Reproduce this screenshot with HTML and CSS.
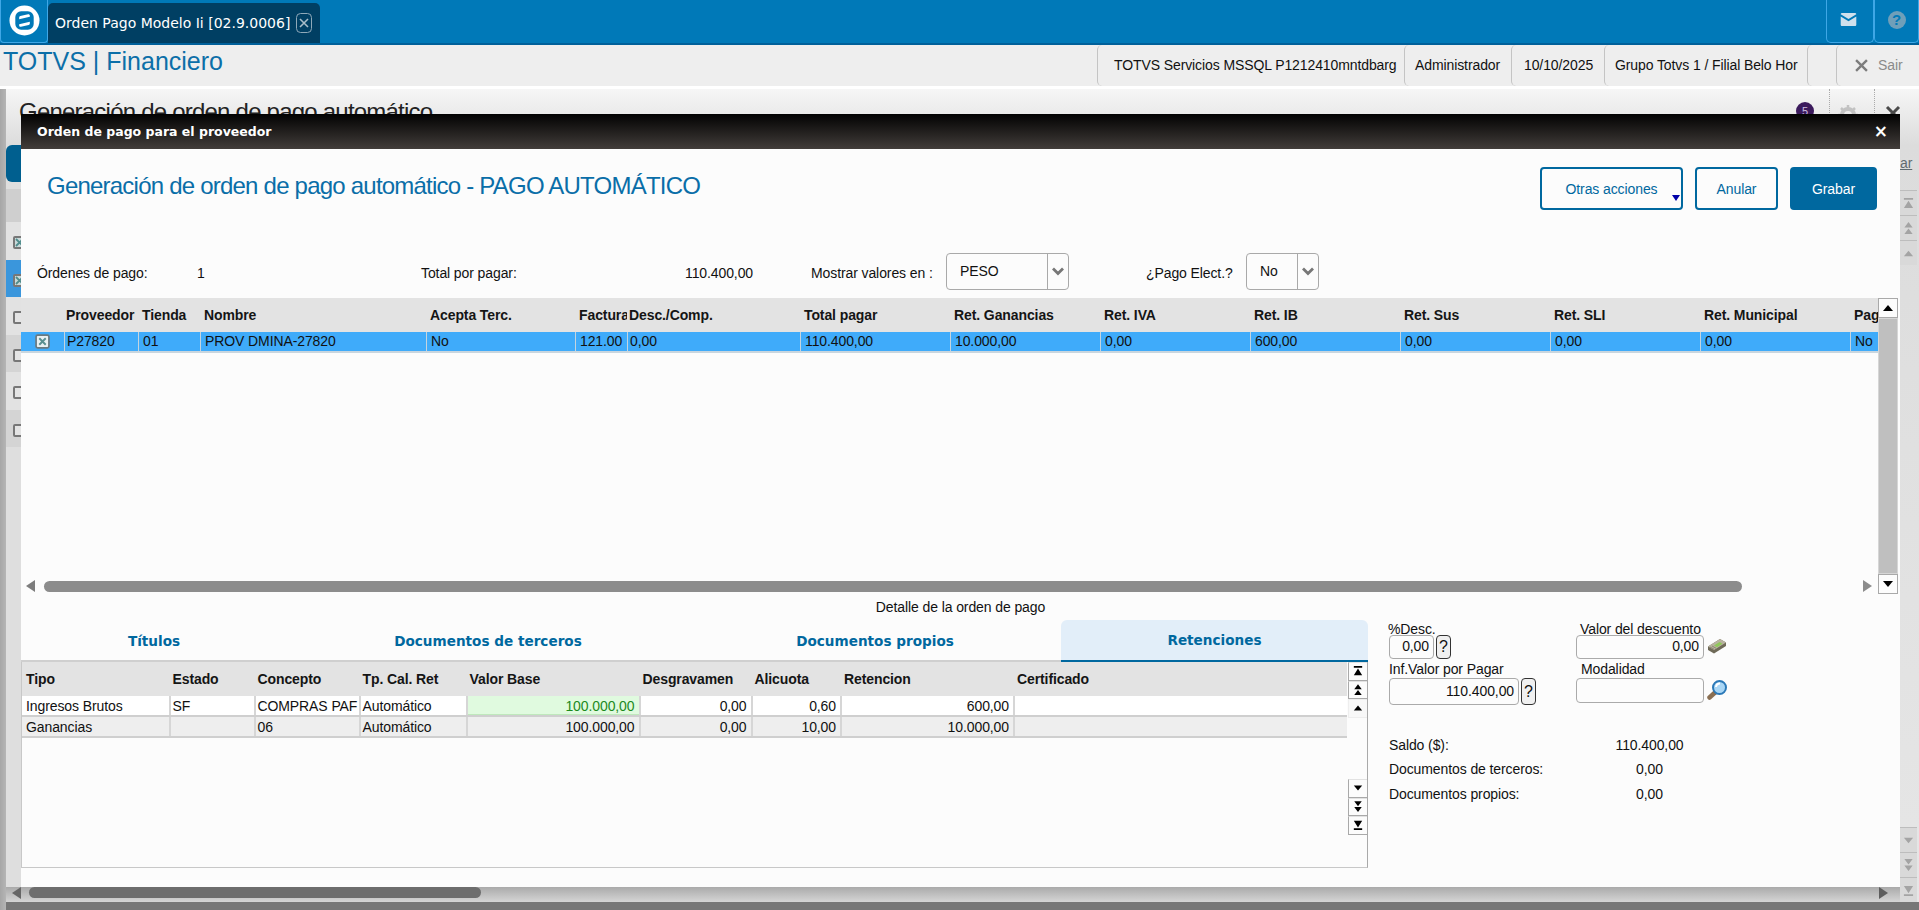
FILE: index.html
```html
<!DOCTYPE html>
<html lang="es">
<head>
<meta charset="utf-8">
<title>Orden Pago Modelo Ii</title>
<link rel="stylesheet" href="styles.css">
</head>
<body>
<svg class="defs" width="0" height="0" aria-hidden="true">
  <symbol id="up" viewBox="0 0 12 12"><path d="M6 3l5 6H1z"/></symbol>
  <symbol id="dn" viewBox="0 0 12 12"><path d="M6 9L1 3h10z"/></symbol>
  <symbol id="up2" viewBox="0 0 12 14"><path d="M6 0l4.500 6h-9zM6 7l4.500 6h-9z"/></symbol>
  <symbol id="dn2" viewBox="0 0 12 14"><path d="M6 6L1.500 0h9zM6 13L1.500 7h9z"/></symbol>
  <symbol id="top" viewBox="0 0 12 14"><path d="M1 1h10v2H1zM6 4l5 8H1z"/></symbol>
  <symbol id="bot" viewBox="0 0 12 14"><path d="M1 11h10v2H1zM6 10L1 2h10z"/></symbol>
</svg>

<header class="topbar">
  <div class="logo">
    <svg viewBox="0 0 32 32" width="31" height="31"><circle cx="16" cy="16" r="15.500" fill="#fff"/><rect x="6.500" y="6.500" width="19" height="19" rx="6" fill="#0079b8"/><path d="M10.500 14.800v-2c0-.8.500-1.300 1.200-1.500l8-1.800c1-.2 1.800.4 1.800 1.400v1.300zM21.500 17.200v2c0 .8-.500 1.300-1.200 1.500l-8 1.800c-1 .2-1.800-.4-1.800-1.400v-1.300z" fill="#fff"/></svg>
  </div>
  <div class="apptab">
    <span class="apptab-label">Orden Pago Modelo Ii [02.9.0006]</span>
    <span class="apptab-close"><svg viewBox="0 0 16 20" width="16" height="20"><rect x=".5" y=".5" width="15" height="19" rx="4" fill="none" stroke="#8fa9b9"/><path d="M4 6l8 8M12 6l-8 8" stroke="#a9bdc9" stroke-width="1.600" fill="none"/></svg></span>
  </div>
  <div class="topbar-fill"></div>
  <div class="topbtn topbtn-mail"><svg viewBox="0 0 18 15" width="17" height="13"><path d="M0 1.500C0 .7.700 0 1.500 0h15c.8 0 1.500.7 1.500 1.500L9 7zM0 4v9.500c0 .8.700 1.500 1.500 1.500h15c.8 0 1.500-.7 1.500-1.500V4L9 9.500z" fill="#cfe0ec"/></svg></div>
  <div class="topbtn topbtn-help"><span class="help-dot">?</span></div>
</header>

<div class="subbar">
  <div class="brand">TOTVS | Financiero</div>
  <div class="subcell sub-env">TOTVS Servicios MSSQL P1212410mntdbarg</div>
  <div class="subcell sub-user">Administrador</div>
  <div class="subcell sub-date">10/10/2025</div>
  <div class="subcell sub-group">Grupo Totvs 1 / Filial Belo Hor</div>
  <div class="subcell sub-blank"></div>
  <div class="subcell sub-exit"><svg viewBox="0 0 12 12" width="13" height="13"><path d="M1 1l10 10M11 1L1 11" stroke="#7d7d7d" stroke-width="2.200" fill="none"/></svg><span>Sair</span></div>
</div>

<main class="page">
  <div class="window">
    <div class="win-head">
      <div class="win-title">Generación de orden de pago automático</div>
      <div class="win-tools">
        <span class="badge">5</span>
        <span class="win-tool"><svg viewBox="0 0 20 20" width="20" height="20"><circle cx="10" cy="10" r="6" fill="none" stroke="#c2c2c2" stroke-width="4"/><path d="M10 0v4M10 16v4M0 10h4M16 10h4M3 3l3 3M14 14l3 3M17 3l-3 3M6 14l-3 3" stroke="#c2c2c2" stroke-width="2.500"/></svg></span>
        <span class="win-tool win-close"><svg viewBox="0 0 16 16" width="16" height="16"><path d="M2 2l12 12M14 2L2 14" stroke="#4a4a4a" stroke-width="3" fill="none"/></svg></span>
      </div>
    </div>
    <div class="win-main">
      <div class="win-center">
        <div class="win-left">
          <div class="win-btn"></div>
          <div class="win-band"></div>
          <div class="win-row light"><span class="wcheck on"><svg viewBox="0 0 9 9" width="9" height="9"><path d="M1 1l7 7M8 1L1 8" stroke="#4f8c8c" stroke-width="1.800"/></svg></span></div>
          <div class="win-row sel"><span class="wcheck on"><svg viewBox="0 0 9 9" width="9" height="9"><path d="M1 1l7 7M8 1L1 8" stroke="#4f8c8c" stroke-width="1.800"/></svg></span></div>
          <div class="win-row light"><span class="wcheck"></span></div>
          <div class="win-row dark"><span class="wcheck"></span></div>
          <div class="win-row light"><span class="wcheck"></span></div>
          <div class="win-row dark"><span class="wcheck"></span></div>
        </div>
        <div class="win-hscroll">
          <span class="arrow-left dark-arrow"></span>
          <span class="win-thumb"></span>
          <span class="arrow-right dark-arrow"></span>
        </div>
      </div>
      <div class="win-right">
        <a class="win-link">ar</a>
        <div class="win-scroll">
          <div class="wsb"><svg><use href="#top"/></svg></div>
          <div class="wsb"><svg><use href="#up2"/></svg></div>
          <div class="wsb"><svg><use href="#up"/></svg></div>
          <div class="wsb-gap"></div>
          <div class="wsb"><svg><use href="#dn"/></svg></div>
          <div class="wsb"><svg><use href="#dn2"/></svg></div>
          <div class="wsb"><svg><use href="#bot"/></svg></div>
        </div>
      </div>
    </div>
  </div>
</main>

<section class="modal">
  <div class="modal-head">
    <span>Orden de pago para el proveedor</span>
    <span class="modal-x">×</span>
  </div>
  <div class="modal-body">
    <div class="m-top">
      <h1 class="m-title">Generación de orden de pago automático - PAGO AUTOMÁTICO</h1>
      <div class="m-actions">
        <button class="btn btn-more">Otras acciones<i class="btn-caret"></i></button>
        <button class="btn btn-cancel">Anular</button>
        <button class="btn btn-save">Grabar</button>
      </div>
    </div>

    <div class="summary">
      <span class="s-a">Órdenes de pago:</span>
      <span class="s-b">1</span>
      <span class="s-c">Total por pagar:</span>
      <span class="s-d">110.400,00</span>
      <span class="s-e">Mostrar valores en :</span>
      <div class="select sel-peso"><span>PESO</span><b><svg viewBox="0 0 14 9" width="14" height="9"><path d="M2 1.500l5 5 5-5" fill="none" stroke="#777" stroke-width="2.800"/></svg></b></div>
      <span class="s-f">¿Pago Elect.?</span>
      <div class="select sel-no"><span>No</span><b><svg viewBox="0 0 14 9" width="14" height="9"><path d="M2 1.500l5 5 5-5" fill="none" stroke="#777" stroke-width="2.800"/></svg></b></div>
    </div>

    <div class="grid-wrap">
      <div class="grid-main">
        <div class="t1">
          <div class="t1-row t-head">
            <div></div><div>Proveedor</div><div>Tienda</div><div>Nombre</div><div>Acepta Terc.</div><div>Factura</div><div>Desc./Comp.</div><div>Total pagar</div><div>Ret. Ganancias</div><div>Ret. IVA</div><div>Ret. IB</div><div>Ret. Sus</div><div>Ret. SLI</div><div>Ret. Municipal</div><div>Pago Elect.</div>
          </div>
          <div class="t1-row t1-sel">
            <div class="cell-check"><svg viewBox="0 0 14 14" width="15" height="15"><rect x="1" y="1" width="12" height="12" rx="1.500" fill="#e9f1f3" stroke="#6a7a80" stroke-width="1.600"/><path d="M4 4l6 6M10 4l-6 6" stroke="#5a8f90" stroke-width="1.800"/></svg></div>
            <div>P27820</div><div>01</div><div>PROV DMINA-27820</div><div>No</div><div>121.00</div><div>0,00</div><div>110.400,00</div><div>10.000,00</div><div>0,00</div><div>600,00</div><div>0,00</div><div>0,00</div><div>0,00</div><div>No</div>
          </div>
        </div>
        <div class="h-scroll">
          <span class="arrow-left"></span>
          <span class="h-thumb"></span>
          <span class="arrow-right"></span>
        </div>
      </div>
      <div class="v-scroll">
        <div class="vs-btn"><svg><use href="#up"/></svg></div>
        <div class="vs-track"></div>
        <div class="vs-btn"><svg><use href="#dn"/></svg></div>
      </div>
    </div>

    <div class="caption">Detalle de la orden de pago</div>

    <div class="detail">
      <div class="detail-left">
        <nav class="tabs">
          <span class="tab tab-1">Títulos</span>
          <span class="tab tab-2">Documentos de terceros</span>
          <span class="tab tab-3">Documentos propios</span>
          <span class="tab tab-4">Retenciones</span>
        </nav>
        <div class="frame">
          <div class="t2">
            <div class="t2-row t-head">
              <div>Tipo</div><div>Estado</div><div>Concepto</div><div>Tp. Cal. Ret</div><div>Valor Base</div><div>Desgravamen</div><div>Alicuota</div><div>Retencion</div><div>Certificado</div>
            </div>
            <div class="t2-row t2-a">
              <div>Ingresos Brutos</div><div>SF</div><div>COMPRAS PAF</div><div>Automático</div><div class="num ok">100.000,00</div><div class="num">0,00</div><div class="num">0,60</div><div class="num">600,00</div><div></div>
            </div>
            <div class="t2-row t2-b">
              <div>Ganancias</div><div></div><div>06</div><div>Automático</div><div class="num">100.000,00</div><div class="num">0,00</div><div class="num">10,00</div><div class="num">10.000,00</div><div></div>
            </div>
          </div>
          <div class="nav">
            <div class="nav-btn"><svg><use href="#top"/></svg></div>
            <div class="nav-btn"><svg><use href="#up2"/></svg></div>
            <div class="nav-btn nav-soft"><svg><use href="#up"/></svg></div>
            <div class="nav-gap"></div>
            <div class="nav-btn"><svg><use href="#dn"/></svg></div>
            <div class="nav-btn"><svg><use href="#dn2"/></svg></div>
            <div class="nav-btn"><svg><use href="#bot"/></svg></div>
          </div>
        </div>
      </div>

      <div class="side">
        <div class="form">
          <label class="lbl lbl-desc">%Desc.</label>
          <label class="lbl lbl-val">Valor del descuento</label>
          <div class="field-row"><span class="input in-desc">0,00</span><span class="q">?</span></div>
          <div class="field-row"><span class="input in-wide">0,00</span>
            <svg class="f-icon" viewBox="0 0 20 18" width="20" height="18"><path d="M1 9.500L13 2l6 3.500V9L7 16.500 1 13z" fill="#6f6a58"/><path d="M1 9.500L13 2l6 3.500L7 13z" fill="#b9b3a0"/><path d="M7 8.500l5.500-3.500 3 1.700L10 10.300z" fill="#8fc85a"/><path d="M3 10l4 2.200M5 9l4 2.200" stroke="#8c8672"/></svg>
          </div>
          <label class="lbl lbl-inf">Inf.Valor por Pagar</label>
          <label class="lbl lbl-mod">Modalidad</label>
          <div class="field-row"><span class="input in-pay">110.400,00</span><span class="q q-tall">?</span></div>
          <div class="field-row field-top"><span class="input in-wide"></span>
            <svg class="f-icon" viewBox="0 0 20 20" width="20" height="20"><path d="M8 12.500l-5.500 5" stroke="#8a6f52" stroke-width="4.500" stroke-linecap="round"/><circle cx="12.500" cy="7.500" r="6.500" fill="#a9d6f5" stroke="#2b79b8" stroke-width="2"/><path d="M9 7a4 4 0 0 1 4-3.500" fill="none" stroke="#fff" stroke-width="2"/></svg>
          </div>
        </div>
        <div class="totals">
          <span>Saldo ($):</span><span class="t-val">110.400,00</span>
          <span>Documentos de terceros:</span><span class="t-val">0,00</span>
          <span>Documentos propios:</span><span class="t-val">0,00</span>
        </div>
      </div>
    </div>
  </div>
</section>
</body>
</html>
```

FILE: styles.css
```css
* { box-sizing: border-box; }
html, body { margin: 0; height: 100%; }
body {
  position: relative;
  width: 1919px;
  height: 910px;
  overflow: hidden;
  font: 14px/1.2 "Liberation Sans", Arial, sans-serif;
  letter-spacing: -.1px;
  color: #111;
  background: #fff;
  display: flex;
  flex-direction: column;
}
.defs { position: absolute; }

/* top bar */
.topbar {
  height: 45px;
  flex: none;
  display: flex;
  background: #0079b8;
  border-bottom: 2px solid #00609a;
}
.logo {
  width: 48px;
  display: flex;
  align-items: center;
  justify-content: center;
  background: #0079b8;
  border: 1px solid #3fa7e6;
  border-top: 0;
  border-radius: 0 0 4px 4px;
  padding-bottom: 1px;
}
.apptab {
  width: 272px;
  margin-top: 3px;
  padding-left: 7px;
  display: flex;
  align-items: center;
  gap: 6px;
  background: #003f63;
  border-radius: 5px 5px 0 0;
  color: #fff;
  font: 14px "DejaVu Sans", sans-serif;
  letter-spacing: 0;
}
.apptab-close { display: flex; }
.topbar-fill { flex: 1; }
.topbtn {
  width: 48px;
  display: flex;
  align-items: center;
  justify-content: center;
  border: 1px solid #3fa7e6;
  border-top: 0;
  border-radius: 0 0 5px 5px;
  padding-bottom: 3px;
}
.topbtn-mail { padding-right: 3px; }
.topbtn-help { width: 45px; }
.help-dot {
  width: 18px;
  height: 18px;
  border-radius: 50%;
  background: #6f9fb9;
  color: #0079b8;
  font: bold 15px/18px "Liberation Sans", sans-serif;
  text-align: center;
}

/* second bar */
.subbar {
  height: 41px;
  flex: none;
  display: flex;
  background: #eeeeee;
}
.brand {
  width: 1097px;
  padding: 1px 0 0 3px;
  font-size: 25px;
  line-height: 30px;
  letter-spacing: 0;
  color: #0c6fa8;
}
.subcell {
  display: flex;
  align-items: center;
  height: 41px;
  border-left: 1px solid #c4c4c4;
  border-radius: 5px 0 0 5px;
  white-space: nowrap;
  overflow: hidden;
}
.sub-env { width: 307px; padding-left: 16px; }
.sub-user { width: 107px; padding-left: 10px; }
.sub-date { width: 93px; padding-left: 12px; }
.sub-group { width: 203px; padding-left: 10px; }
.sub-blank { width: 29px; }
.sub-exit { width: 83px; padding-left: 18px; gap: 10px; color: #8a8a8a; }

/* window behind the dialog */
.page {
  flex: 1;
  min-height: 0;
  padding: 3px 0 8px 6px;
  background: linear-gradient(90deg, #a6a6a6 0, #b5b5b5 6px, #777 6px);
  position: relative;
}
.page::before {
  content: "";
  position: absolute;
  left: 0; right: 0; top: 0;
  height: 3px;
  background: #fff;
}
.window {
  height: 100%;
  display: flex;
  flex-direction: column;
  background: #dedede;
}
.win-head {
  height: 56px;
  flex: none;
  display: flex;
  justify-content: space-between;
  padding-left: 13px;
  background: linear-gradient(#f6f6f6, #dcdcdc);
}
.win-title { font-size: 24px; letter-spacing: -.78px; padding-top: 9px; color: #222; }
.win-tools { display: flex; align-items: flex-start; }
.badge {
  width: 18px;
  height: 18px;
  margin: 13px 15px 0 0;
  border-radius: 50%;
  background: #3b1a5c;
  color: #cdbfe0;
  font-size: 11px;
  line-height: 18px;
  text-align: center;
}
.win-tool {
  width: 45px;
  height: 36px;
  padding: 16px 0 0 8px;
  border-left: 1px dotted #aaa;
}
.win-close { padding-left: 10px; }
.win-main { flex: 1; min-height: 0; display: flex; }
.win-center { flex: 1; min-width: 0; display: flex; flex-direction: column; }
.win-left { flex: 1; min-height: 0; width: 15px; display: flex; flex-direction: column; }
.win-btn { height: 37px; flex: none; background: #005f8f; border-radius: 6px 0 0 6px; }
.win-band { height: 33px; flex: none; margin-top: 7px; background: #cfcfcf; }
.win-row {
  height: 37.500px;
  flex: none;
  padding: 14px 0 0 7px;
  overflow: hidden;
}
.win-row.light { background: #e2e2e2; }
.win-row.dark { background: #d4d4d4; }
.win-row.sel { background: #3a96dc; }
.wcheck {
  display: block;
  width: 13px;
  height: 13px;
  border: 2px solid #777;
  border-radius: 2px;
  background: #e4e4e4;
  line-height: 0;
}
.wcheck.on { background: #c9d9d9; }
.win-right {
  width: 19px;
  flex: none;
  display: flex;
  flex-direction: column;
  background: linear-gradient(#dcdcdc, #e6e6e6);
  overflow: hidden;
}
.win-link {
  height: 45px;
  flex: none;
  padding: 10px 0 0 0;
  color: #5f6a70;
  text-decoration: underline;
  white-space: nowrap;
}
.win-scroll { flex: 1; display: flex; flex-direction: column; padding-right: 2px; }
.wsb {
  height: 25px;
  flex: none;
  border-top: 1px solid #bdbdbd;
  background: #d9d9d9;
  display: flex;
  align-items: center;
  justify-content: center;
}
.wsb svg { width: 11px; height: 13px; fill: #a4a4a4; }
.wsb-gap { flex: 1; }
.win-hscroll {
  height: 15px;
  flex: none;
  display: flex;
  align-items: flex-start;
  background: linear-gradient(#aaa, #d5d5d5);
  padding-left: 6px;
}
.win-thumb {
  width: 452px;
  height: 11px;
  margin-left: 8px;
  border-radius: 6px;
  background: #6d6d6d;
}
.win-hscroll .arrow-right { margin-left: auto; margin-right: 12px; }

/* arrows of the scrollbars */
.arrow-left, .arrow-right {
  flex: none;
  width: 0;
  height: 0;
  border-top: 6px solid transparent;
  border-bottom: 6px solid transparent;
}
.arrow-left { border-right: 9px solid #7d7d7d; }
.arrow-right { border-left: 9px solid #8c8c8c; }
.dark-arrow.arrow-left { border-right-color: #666; }
.dark-arrow.arrow-right { border-left-color: #5d5d5d; }

/* dialog */
.modal {
  position: absolute;
  left: 21px;
  top: 114px;
  width: 1879px;
  height: 773px;
  display: flex;
  flex-direction: column;
  background: #fcfcfc;
}
.modal-head {
  height: 35px;
  flex: none;
  display: flex;
  align-items: center;
  justify-content: space-between;
  padding: 0 12px 0 16px;
  background: linear-gradient(#020202, #423d3a);
  color: #fff;
  font: bold 12.500px "DejaVu Sans", sans-serif;
  letter-spacing: 0;
}
.modal-x { font-size: 17px; line-height: 1; }
.modal-body { flex: 1; min-height: 0; display: flex; flex-direction: column; }
.m-top {
  height: 104px;
  flex: none;
  display: flex;
  justify-content: space-between;
  padding: 18px 23px 0 26px;
}
.m-title {
  margin: 6px 0 0;
  font-size: 24px;
  font-weight: normal;
  line-height: 26px;
  letter-spacing: -.78px;
  color: #0a6ea8;
}
.m-actions { display: flex; gap: 12px; height: 43px; }
.btn {
  height: 43px;
  position: relative;
  font: 14px "Liberation Sans", sans-serif;
  letter-spacing: -.1px;
  border: 2px solid #00689f;
  border-radius: 4px;
  background: #fcfcfc;
  color: #00689f;
  padding: 0;
}
.btn-more { width: 143px; }
.btn-cancel { width: 83px; }
.btn-save { width: 87px; background: #00689f; color: #fff; }
.btn-caret {
  position: absolute;
  right: 1px;
  bottom: 7px;
  border-left: 4.500px solid transparent;
  border-right: 4.500px solid transparent;
  border-top: 6px solid #0000a8;
}
.summary {
  height: 37px;
  flex: none;
  display: grid;
  grid-template-columns: 160px 224px 264px 126px 135px 200px 100px 73px;
  align-items: center;
  padding-left: 16px;
  margin-bottom: 8px;
}
.summary > span { padding-top: 3px; }
.select {
  height: 37px;
  display: flex;
  align-items: center;
  border: 1px solid #a9a9a9;
  border-radius: 4px;
  background: #fcfcfc;
}
.sel-peso { width: 123px; }
.select span { flex: 1; padding-left: 13px; padding-bottom: 1px; }
.select b {
  width: 21px;
  height: 100%;
  display: flex;
  align-items: center;
  justify-content: center;
  border-left: 1px solid #a9a9a9;
}

/* upper grid */
.grid-wrap { height: 296px; flex: none; display: flex; }
.grid-main { width: 1857px; display: flex; flex-direction: column; }
.t1 { height: 282px; overflow: hidden; }
.t1-row {
  width: 1979px;
  display: grid;
  grid-template-columns: 43px 74px 62px 226px 149px 52px 173px repeat(8, 150px);
}
.t1-row > div { padding-left: 4px; overflow: hidden; white-space: nowrap; }
.t-head { background: #e3e3e3; font-weight: bold; color: #151515; }
.t1 .t-head { height: 34px; line-height: 34px; }
.t1-row > div:nth-child(2) { padding-left: 2px; }
.t1-row > div:nth-child(7) { padding-left: 2px; }
.t1-sel {
  height: 21px;
  line-height: 19px;
  background: #3fabfa;
  border-bottom: 2px solid #c9d6df;
}
.t1-sel > div { border-left: 1px solid #c4d4df; }
.t1-sel > div:first-child { border-left: 0; }
.t1-row > .cell-check { padding: 2px 0 0 14px; line-height: 0; }
.h-scroll {
  height: 12px;
  display: flex;
  align-items: center;
  padding: 0 6px 0 5px;
}
.h-thumb {
  width: 1698px;
  height: 11px;
  margin-left: 9px;
  border-radius: 6px;
  background: #8c8c8c;
}
.h-scroll .arrow-right { margin-left: auto; }
.v-scroll { width: 20px; display: flex; flex-direction: column; }
.vs-btn {
  height: 20px;
  flex: none;
  display: flex;
  align-items: center;
  justify-content: center;
  border: 1px solid #a9a9a9;
  background: #fcfcfc;
}
.vs-btn svg { width: 12px; height: 12px; fill: #000; }
.vs-track { flex: 1; background: #bfbfbf; border: 1px solid #d6d6d6; }

.caption {
  height: 26px;
  flex: none;
  text-align: center;
  line-height: 26px;
}

/* lower area */
.detail { height: 248px; flex: none; display: flex; }
.detail-left { width: 1347px; flex: none; display: flex; flex-direction: column; }
.tabs { height: 42px; flex: none; display: flex; border-bottom: 2px solid #cfcfcf; }
.tab {
  display: flex;
  align-items: center;
  justify-content: center;
  padding-top: 2px;
  color: #00689f;
  font: bold 13.600px "DejaVu Sans", sans-serif;
  letter-spacing: 0;
}
.tab-1 { width: 266px; }
.tab-2 { width: 402px; }
.tab-3 { width: 372px; }
.tab-4 {
  flex: 1;
  height: 42px;
  padding-top: 0;
  background: #e2eef9;
  border-bottom: 2px solid #00689f;
  border-radius: 6px 6px 0 0;
}
.frame {
  flex: 1;
  min-height: 0;
  display: flex;
  border-left: 1px solid #c8c8c8;
  border-bottom: 1px solid #c8c8c8;
  border-right: 1px solid #a9a9a9;
}
.t2 { width: 1325px; flex: none; }
.t2-row {
  display: grid;
  grid-template-columns: 146.500px 85px 105px 107px 173px 112px 89.500px 173px 334px;
}
.t2-row > div { padding: 0 4px; overflow: hidden; white-space: nowrap; }
.t2 .t-head { height: 34px; line-height: 34px; }
.t2-a, .t2-b { height: 21px; line-height: 20px; border-bottom: 2px solid #cfcfcf; }
.t2-a { background: #fff; }
.t2-b { background: #eee; }
.t2-a > div + div, .t2-b > div + div { border-left: 2px solid #d6d6d6; padding-left: 2px; }
.num { text-align: right; }
.ok { background: #e0fadf; color: #1d8a1d; box-shadow: inset 0 -1px #bfe8bc; }
.nav { flex: 1; display: flex; flex-direction: column; padding-left: 1px; }
.nav-btn {
  height: 18.500px;
  flex: none;
  display: flex;
  align-items: center;
  justify-content: center;
  border: 1px solid #a9a9a9;
  border-right: 0;
  border-top-color: #e2e2e2;
}
.nav-btn svg { width: 10px; height: 12px; fill: #000; }
.nav-soft { border-color: #eee; background: #f8f8f8; }
.nav-gap { height: 61.500px; flex: none; }

/* side form */
.side { flex: 1; padding: 0 0 0 21px; }
.form {
  display: grid;
  grid-template-columns: 187px 160px;
  grid-template-rows: 15px 24px 19px 27px;
}
.lbl { line-height: 18px; white-space: nowrap; }
.lbl-desc { margin-left: -1px; }
.lbl-val { padding-left: 4px; }
.lbl-inf { padding-top: 1px; }
.lbl-mod { padding: 1px 0 0 5px; }
.field-row { display: flex; align-items: flex-start; gap: 2px; }
.input {
  display: block;
  height: 100%;
  padding-right: 4px;
  border: 1px solid #aaa;
  border-radius: 4px;
  background: #fcfcfc;
  text-align: right;
  line-height: 21px;
}
.in-desc { width: 45px; }
.in-pay { width: 130px; height: 27px; line-height: 24px; }
.in-wide { width: 128px; }
.field-top .input { height: 25px; }
.q {
  width: 15px;
  height: 24px;
  border: 1px solid #333;
  border-radius: 4px;
  background: #f0f0f0;
  text-align: center;
  font-size: 16px;
  line-height: 22px;
}
.q-tall { height: 27px; line-height: 25px; }
.f-icon { margin-left: 1px; margin-top: 2px; }
.totals {
  display: grid;
  grid-template-columns: 226px 69px;
  grid-auto-rows: 24.500px;
  align-items: center;
  margin-top: 28px;
}
.t-val { text-align: center; }
```
